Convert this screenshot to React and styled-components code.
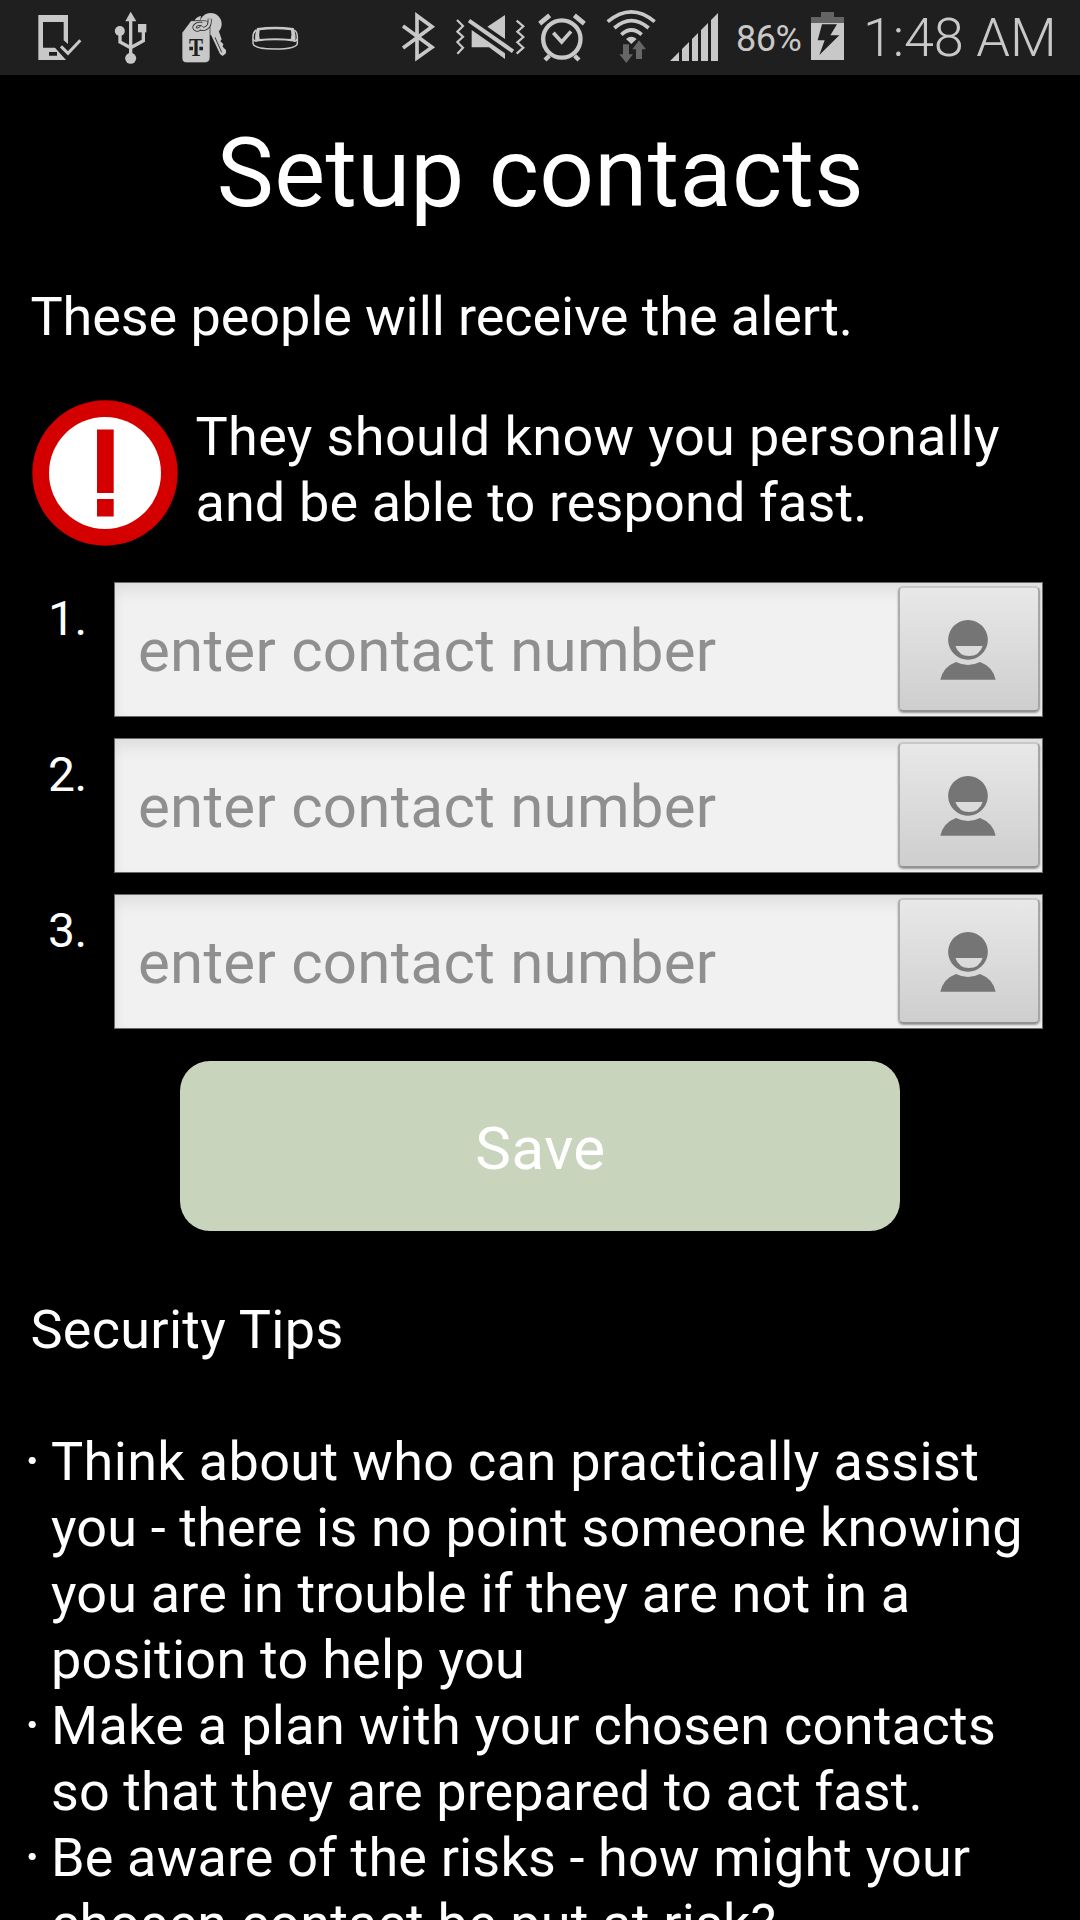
import React from "react";
import styled, { createGlobalStyle } from "styled-components";

const GlobalStyle = createGlobalStyle`
  * { box-sizing: border-box; }
  body {
    margin: 0;
    background: #000;
    font-family: Roboto, "Noto Sans", sans-serif;
  }
`;

const Screen = styled.div`
  display: flex;
  flex-direction: column;
  width: 1080px;
  height: 1920px;
  overflow: hidden;
  background: #000;
  color: #fff;
`;

const StatusBar = styled.header`
  display: flex;
  flex: none;
  justify-content: space-between;
  height: 75px;
  padding: 0 27px 0 36px;
  background: #1f1f1f;
  color: #c8c8c8;
`;

const StatusGroup = styled.div`
  display: flex;
  height: 75px;
`;

const StatusIcon = styled.svg`
  display: block;
  flex: none;
  height: 75px;
  margin-left: ${(p) => p.$gap || 0}px;
`;

const BatteryLevel = styled.span`
  width: 75px;
  margin-left: 16px;
  font-size: 36px;
  font-weight: 400;
  line-height: 78px;
  letter-spacing: -0.5px;
  white-space: nowrap;
`;

const Clock = styled.span`
  margin-left: 19px;
  width: 190px;
  font-size: 54px;
  font-weight: 300;
  line-height: 75px;
  letter-spacing: -0.2px;
  white-space: nowrap;
`;

const Content = styled.main`
  display: flex;
  flex-direction: column;
  padding: 42px 31px 0;
`;

const Title = styled.h1`
  margin: 0;
  padding-left: 1px;
  font-size: 96px;
  font-weight: 400;
  line-height: 112px;
  letter-spacing: 0.32px;
  text-align: center;
`;

const Line = styled.span`
  display: block;
  font-size: 54px;
  line-height: 66px;
  letter-spacing: ${(p) => p.$tracking || 0}px;
  white-space: nowrap;
`;

const Intro = styled.p`
  margin: 55px 0 0 -0.6px;
`;

const Warning = styled.div`
  display: flex;
  gap: 17.4px;
  margin-top: 50px;
`;

const WarningIcon = styled.svg`
  display: block;
  flex: none;
  width: 147px;
  height: 146px;
`;

const WarningText = styled.p`
  margin: 0;
  padding-top: 4px;
`;

const ContactList = styled.ol`
  display: flex;
  flex-direction: column;
  gap: 21px;
  margin: 36px 0 0;
  padding: 0 6px 0 0;
  list-style: none;
`;

const ContactRow = styled.li`
  display: grid;
  grid-template-columns: 66px 1fr;
  padding-left: 17px;
`;

const ContactIndex = styled.label`
  padding-top: 9px;
  font-size: 48px;
  line-height: 56px;
  letter-spacing: -0.4px;
`;

const Field = styled.div`
  display: flex;
  height: 135px;
  padding: 3px 2px 4px 0;
  border: 1px solid #6b6b6b;
  background: #f1f1f1;
  box-shadow: inset 0 12px 16px -5px #dcdcdc, inset 4px 0 8px -4px #e2e2e2;
`;

const NumberInput = styled.input`
  flex: 1;
  min-width: 0;
  padding: 3px 0 0 23px;
  border: 0;
  outline: 0;
  background: transparent;
  color: #222;
  font-family: inherit;
  font-size: 60px;
  letter-spacing: 0.26px;

  &::placeholder {
    color: #8f8f8f;
    opacity: 1;
  }
`;

const PickButton = styled.button`
  display: flex;
  align-items: center;
  justify-content: center;
  width: 142px;
  padding: 1px 3px 0 0;
  border: 2px solid;
  border-color: #c8c8c8 #a6a6a6 #929292 #adadad;
  border-radius: 5px;
  background: linear-gradient(#e8e8e8, #cecece);
  box-shadow: 0 1px 2px #9a9a9a;
`;

const PersonSvg = styled.svg`
  display: block;
  width: 56px;
  height: 60px;
`;

const SaveButton = styled.button`
  align-self: center;
  width: 720px;
  height: 170px;
  margin-top: 32px;
  padding: 4px 0 0 1px;
  border: 0;
  border-radius: 30px;
  background: #c9d4bc;
  color: #fff;
  font-family: inherit;
  font-size: 60px;
  letter-spacing: 0.5px;
`;

const TipsHeading = styled.h2`
  margin: 66px 0 0 -0.6px;
  font-weight: 400;
`;

const TipsList = styled.ul`
  display: flex;
  flex-direction: column;
  margin: 66px 0 0;
  padding: 0;
  list-style: none;
`;

const Tip = styled.li`
  display: flex;
`;

const Bullet = styled.span`
  flex: none;
  width: 27px;
  height: 66px;
  margin-left: -7px;
  font-size: 64px;
  line-height: 68px;
`;

const TipText = styled.div`
  flex: none;
`;

const CONTACTS = [1, 2, 3];

const TIPS = [
  [
    ["Think about who can practically assist", 0.35],
    ["you - there is no point someone knowing", 0.15],
    ["you are in trouble if they are not in a", 0.17],
    ["position to help you", 0.24],
  ],
  [
    ["Make a plan with your chosen contacts", 0.29],
    ["so that they are prepared to act fast.", 0.09],
  ],
  [
    ["Be aware of the risks - how might your", 0.15],
    ["chosen contact be put at risk?", 0.18],
  ],
];

const INK = "#c8c8c8";
const BAR = "#1f1f1f";

function PhoneCheckIcon() {
  return (
    <StatusIcon width="48" viewBox="108 0 144 225" fill={INK}>
      <path
        fillRule="evenodd"
        d="M115 45H204V132L191 121V66H129V143H165L198 180H115ZM147 156V167H171V156Z"
      />
      <path d="M183 139L204 160L241 121" fill="none" stroke={INK} strokeWidth="9" />
    </StatusIcon>
  );
}

function UsbIcon() {
  return (
    <StatusIcon $gap={29} width="36" viewBox="339 0 108 225" fill={INK}>
      <path d="M376 64L392 35L409 64Z" />
      <circle cx="392" cy="175" r="16.5" />
      <circle cx="359.500" cy="93" r="15" />
      <rect x="414" y="72" width="25" height="25" />
      <path
        d="M392 60V165M360 100V126L392 143M430 92V122L392 143"
        fill="none"
        stroke={INK}
        strokeWidth="10"
      />
    </StatusIcon>
  );
}

function KeyTagIcon() {
  return (
    <StatusIcon $gap={31} width="48" viewBox="540 0 144 225" fill={INK}>
      <path d="M583 62Q590 50 603 48L600 62Z" />
      <circle cx="632" cy="72" r="33" />
      <path d="M630 98L656 92L665 118L661 124L670 132L668 140L678 150V160L668 168L660 162Z" />
      <path d="M645 112L665 157" stroke={BAR} strokeWidth="2.5" />
      <path
        d="M546 98L573 62H612Q630 62 630 82V172Q630 188 614 188H560Q546 188 546 174Z"
        stroke={BAR}
        strokeWidth="2"
      />
      <path
        d="M606 72C590 68 580 80 585 86C591 92 602 88 606 80M602 82C608 92 628 84 629 66V56"
        fill="none"
        stroke={BAR}
        strokeWidth="12"
      />
      <path
        d="M606 72C590 68 580 80 585 86C591 92 602 88 606 80M602 82C608 92 628 84 629 66V56"
        fill="none"
        stroke={INK}
        strokeWidth="7.5"
      />
      <text
        x="588"
        y="167"
        textAnchor="middle"
        fontFamily="Liberation Serif, serif"
        fontWeight="700"
        fontSize="74"
        textLength="42"
        lengthAdjust="spacingAndGlyphs"
        fill={BAR}
      >
        T
      </text>
      <path d="M568 140H579V151H568ZM598 140H609V151H598Z" fill={BAR} />
    </StatusIcon>
  );
}

function BandIcon() {
  return (
    <StatusIcon $gap={22} width="50" viewBox="750 0 150 225" fill="none" stroke={INK} strokeWidth="4.5">
      <path d="M769 90Q759 96 759 112V130Q761 147 825 147Q890 147 892 130V112Q892 96 883 90" />
      <path d="M759 116Q762 124 770 124M892 116Q889 124 881 124" />
      <path
        fill={INK}
        stroke="none"
        fillRule="evenodd"
        d="M771 84Q825 76 881 84Q889 104 886 125Q826 117 766 125Q763 104 771 84ZM779 91Q776 104 779 117Q826 112 872 117Q876 104 873 91Q826 84 779 91Z"
      />
    </StatusIcon>
  );
}

function BluetoothIcon() {
  return (
    <StatusIcon width="36" viewBox="60 0 108 225" fill="none" stroke={INK} strokeWidth="11">
      <path d="M69 78L156 142L111 174V47L156 80L69 144" />
    </StatusIcon>
  );
}

function MuteVibrateIcon() {
  return (
    <StatusIcon $gap={18} width="72" viewBox="222 0 216 225" fill={INK}>
      <path d="M275 90L375 160V177L327 142H275ZM375 45V117L322 80Z" />
      <path d="M267 62L399 154" stroke={INK} strokeWidth="12" />
      <path
        d="M231 60L249 78L232 95L249 110L232 126L249 143L232 161M410 62L430 79L412 95L430 111L412 127L430 143L410 161"
        fill="none"
        stroke={INK}
        strokeWidth="6.5"
      />
    </StatusIcon>
  );
}

function AlarmIcon() {
  return (
    <StatusIcon $gap={11} width="50" viewBox="471 0 150 225" fill="none" stroke={INK}>
      <circle cx="545.500" cy="117" r="56" strokeWidth="13" />
      <path d="M520 98L545 126L573 94" strokeWidth="11" />
      <path d="M479 71L509 46M583 46L613 71" strokeWidth="14" />
      <path d="M508 167L495 180M584 167L597 180" strokeWidth="13" />
    </StatusIcon>
  );
}

function WifiIcon() {
  return (
    <StatusIcon $gap={18} width="52" viewBox="675 0 156 225" fill={INK}>
      <path
        d="M683 65Q754 6 824 65M703 84Q754 40 806 84M724 104Q754 76 785 104"
        fill="none"
        stroke={INK}
        strokeWidth="11"
      />
      <path d="M738 117Q754 104 770 117L754 132Z" />
      <path
        d="M729 133H747V163H759L739 189L718 163H729ZM768 177V148H757L777 121L798 148H786V177Z"
        fill="#666"
      />
    </StatusIcon>
  );
}

function SignalIcon() {
  return (
    <StatusIcon $gap={12} width="51" viewBox="867 0 153 225" fill={INK}>
      <path d="M870 183L897 156V183ZM906 183V147L927 126V183ZM936 183V117L954 99V183ZM963 183V90L984 69V183ZM993 183V60L1014 39V183Z" />
    </StatusIcon>
  );
}

function BatteryIcon() {
  return (
    <StatusIcon width="33" viewBox="273 0 99 225">
      <path d="M303 36H342V51H372V69H273V51H303Z" fill="#646464" />
      <path d="M273 69H372V180H273Z" fill={INK} />
      <path d="M306 73H351L331 106H358L298 165L314 121H293Z" fill={BAR} />
    </StatusIcon>
  );
}

function PersonIcon() {
  return (
    <PersonSvg viewBox="240 180 168 180" fill="#757575">
      <path
        fillRule="evenodd"
        d="M324 180A59.500 59.500 0 1 1 323.900 180ZM286 258Q297 288 327 288Q358 288 368 258Z"
      />
      <path d="M241 359Q250 320 288 306Q324 324 360 306Q398 320 407 359Z" />
    </PersonSvg>
  );
}

export default function App() {
  return (
    <>
      <GlobalStyle />
      <Screen>
        <StatusBar>
          <StatusGroup>
            <PhoneCheckIcon />
            <UsbIcon />
            <KeyTagIcon />
            <BandIcon />
          </StatusGroup>
          <StatusGroup>
            <BluetoothIcon />
            <MuteVibrateIcon />
            <AlarmIcon />
            <WifiIcon />
            <SignalIcon />
            <BatteryLevel>86%</BatteryLevel>
            <BatteryIcon />
            <Clock>1:48 AM</Clock>
          </StatusGroup>
        </StatusBar>
        <Content>
          <Title>Setup contacts</Title>
          <Intro>
            <Line $tracking={-0.08}>These people will receive the alert.</Line>
          </Intro>
          <Warning>
            <WarningIcon viewBox="0 0 147 146">
              <circle cx="74" cy="73" r="72.700" fill="#d40000" />
              <circle cx="74" cy="73" r="56" fill="#fff" />
              <path d="M66 29.500H82.700V93H66ZM66 99H82.700V116.500H66Z" fill="#d40000" />
            </WarningIcon>
            <WarningText>
              <Line $tracking={0.39}>They should know you personally</Line>
              <Line $tracking={0.13}>and be able to respond fast.</Line>
            </WarningText>
          </Warning>
          <ContactList>
            {CONTACTS.map((n) => (
              <ContactRow key={n}>
                <ContactIndex htmlFor={`contact-${n}`}>{n}.</ContactIndex>
                <Field>
                  <NumberInput id={`contact-${n}`} type="tel" placeholder="enter contact number" />
                  <PickButton type="button" aria-label="Pick contact">
                    <PersonIcon />
                  </PickButton>
                </Field>
              </ContactRow>
            ))}
          </ContactList>
          <SaveButton type="button">Save</SaveButton>
          <TipsHeading>
            <Line $tracking={0.3}>Security Tips</Line>
          </TipsHeading>
          <TipsList>
            {TIPS.map((lines) => (
              <Tip key={lines[0][0]}>
                <Bullet>·</Bullet>
                <TipText>
                  {lines.map(([text, tracking]) => (
                    <Line key={text} $tracking={tracking}>
                      {text}
                    </Line>
                  ))}
                </TipText>
              </Tip>
            ))}
          </TipsList>
        </Content>
      </Screen>
    </>
  );
}
